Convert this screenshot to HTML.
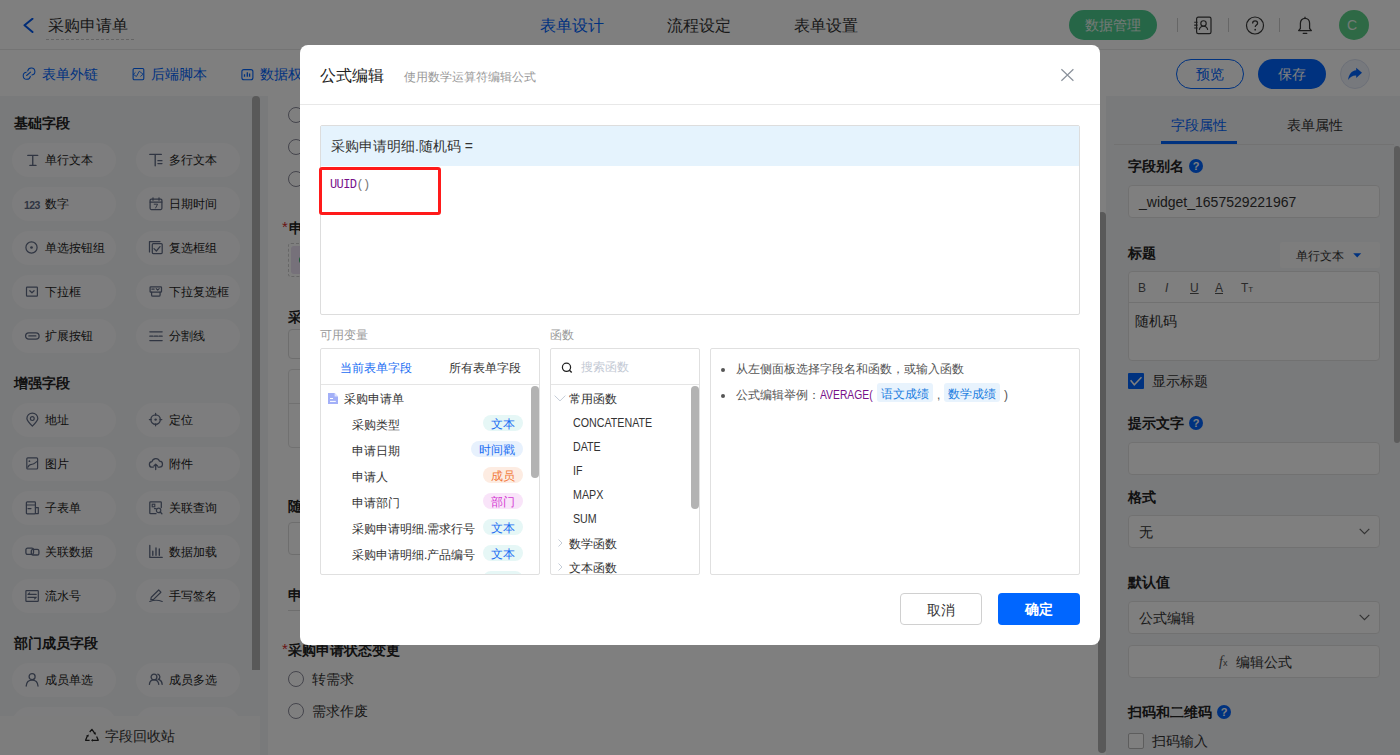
<!DOCTYPE html>
<html><head><meta charset="utf-8">
<style>
*{box-sizing:border-box;margin:0;padding:0}
html,body{width:1400px;height:755px;overflow:hidden}
body{position:relative;font-family:"Liberation Sans",sans-serif;color:#333;background:#fff}
.abs{position:absolute}
.t{position:absolute;white-space:nowrap;line-height:1}
/* header */
#hdr{left:0;top:0;width:1400px;height:50px;background:#fff;border-bottom:1px solid #e8e8e8}
#tb{left:0;top:50px;width:1400px;height:46px;background:#fff}
#side{left:0;top:96px;width:268px;height:659px;background:#f3f4f6}
.pill{position:absolute;width:104px;height:34px;border-radius:17px;background:#fbfbfc}
.pill .ic{position:absolute;left:13px;top:10px;width:15px;height:15px}
.pill span{position:absolute;left:33px;top:11px;font-size:12px;line-height:12px;color:#222;white-space:nowrap}
.sec{position:absolute;left:14px;font-size:14px;font-weight:bold;color:#222;line-height:14px}
#canvas{left:268px;top:96px;width:838px;height:659px;background:#fff}
#right{left:1106px;top:96px;width:294px;height:659px;background:#f3f4f6}
.lbl{position:absolute;left:1128px;font-size:14px;font-weight:600;color:#222;line-height:14px;white-space:nowrap}
.inp{position:absolute;left:1128px;width:252px;height:33px;border:1px solid #e3e3e3;border-radius:4px;background:#fff}
.qm{display:inline-block;width:14px;height:14px;border-radius:50%;background:#0064ff;color:#fff;font-size:11px;line-height:14px;text-align:center;font-weight:bold;vertical-align:top;margin-left:5px}
#mask{left:0;top:0;width:1400px;height:755px;background:rgba(0,0,0,.5)}
#modal{left:300px;top:45px;width:800px;height:600px;background:#fff;border-radius:8px}

.tag{height:16px;border-radius:8px;font-size:12px;line-height:18px;text-align:center;white-space:nowrap}
.tag2{height:19px;border-radius:3px;background:#e8f3fd;color:#1a7de0;font-size:12px;line-height:22px;text-align:center;white-space:nowrap}
.fn{font-size:12px;color:#333;transform:scaleX(0.89);transform-origin:0 0}
</style></head><body>
<!-- ============ BASE PAGE ============ -->
<div id="hdr" class="abs">
  <svg class="abs" style="left:23px;top:18px" width="11" height="16" viewBox="0 0 11 16"><path d="M9.5 0.8L1.5 7.3L9.5 14" fill="none" stroke="#0058ee" stroke-width="2" stroke-linecap="round" stroke-linejoin="round"/></svg>
  <div class="t" style="left:48px;top:18px;font-size:16px;color:#333">采购申请单</div>
  <div class="abs" style="left:46px;top:39px;width:88px;border-top:1px dashed #c8c8c8"></div>
  <div class="t" style="left:540px;top:18px;font-size:16px;color:#0064ff">表单设计</div>
  <div class="t" style="left:667px;top:18px;font-size:16px;color:#333">流程设定</div>
  <div class="t" style="left:794px;top:18px;font-size:16px;color:#333">表单设置</div>
  <div class="abs" style="left:1069px;top:10px;width:88px;height:30px;border-radius:15px;background:#4ccc8f"></div>
  <div class="t" style="left:1085px;top:18px;font-size:14px;color:#e8f5ee">数据管理</div>
  <div class="abs" style="left:1177px;top:18px;width:1px;height:14px;background:#ccc"></div>
  <div class="abs" style="left:1228px;top:18px;width:1px;height:14px;background:#ccc"></div>
  <div class="abs" style="left:1279px;top:18px;width:1px;height:14px;background:#ccc"></div>
  <!-- contact icon -->
  <svg class="abs" style="left:1193px;top:16px" width="20" height="19" viewBox="0 0 20 19"><rect x="3.6" y="1.2" width="14.4" height="16.4" rx="1.6" fill="none" stroke="#3a3a3a" stroke-width="1.2"/><circle cx="10.5" cy="7.4" r="2.7" fill="none" stroke="#3a3a3a" stroke-width="1.15"/><path d="M6.3 13.8c0.4-2.3 2.1-3.6 4.2-3.6s3.8 1.3 4.2 3.6" fill="none" stroke="#3a3a3a" stroke-width="1.15"/><path d="M1.2 6.2h3.4M1.2 9.1h3.4M1.2 12h3.4" stroke="#3a3a3a" stroke-width="1.1"/></svg>
  <!-- help icon -->
  <svg class="abs" style="left:1245px;top:16px" width="20" height="20" viewBox="0 0 20 20"><circle cx="10" cy="9.5" r="8.5" fill="none" stroke="#3a3a3a" stroke-width="1.2"/><path d="M7.6 7.4c0-1.5 1.1-2.5 2.5-2.5s2.5 1 2.5 2.3c0 1.7-2.4 2-2.4 3.9" fill="none" stroke="#3a3a3a" stroke-width="1.25"/><circle cx="10.2" cy="13.7" r="0.85" fill="#3a3a3a"/></svg>
  <!-- bell -->
  <svg class="abs" style="left:1297px;top:16px" width="17" height="19" viewBox="0 0 17 19"><path d="M8 2.3c-2.8 0-4.6 2.2-4.6 5v5.2L1.6 14.6h12.8L12.6 12.5V7.3c0-2.8-1.8-5-4.6-5z" fill="none" stroke="#3a3a3a" stroke-width="1.25" stroke-linejoin="round"/><path d="M8 0.7v1.6" stroke="#3a3a3a" stroke-width="1.2"/><path d="M6.2 17.3h3.6" stroke="#3a3a3a" stroke-width="1.3" stroke-linecap="round"/></svg>
  <div class="abs" style="left:1339px;top:10px;width:30px;height:30px;border-radius:50%;background:#5dd28a"></div>
  <div class="t" style="left:1347px;top:18px;font-size:14px;color:#e6f6ec">C</div>
</div>
<div id="tb" class="abs">
  <svg class="abs" style="left:22px;top:17px" width="14" height="14" viewBox="0 0 14 14"><path d="M4.17 5.15A3.6 3.6 0 1 0 8.35 9.33M9.93 8.05A3.6 3.6 0 1 0 5.75 3.87M4.6 8.5L8.6 5.1" fill="none" stroke="#0064ff" stroke-width="1.05" stroke-linecap="round"/></svg>
  <div class="t" style="left:42px;top:17px;font-size:14px;color:#0064ff">表单外链</div>
  <svg class="abs" style="left:132px;top:17px" width="13" height="14" viewBox="0 0 13 14"><rect x="1.1" y="1.5" width="10.7" height="11.2" rx="1.2" fill="none" stroke="#0064ff" stroke-width="1.1"/><path d="M3.5 5.3L1.4 7.4L4.4 9.5L7.3 4.2L11.1 7.2L8.4 9.5" fill="none" stroke="#0064ff" stroke-width="0.85" stroke-linejoin="round"/></svg>
  <div class="t" style="left:151px;top:17px;font-size:14px;color:#0064ff">后端脚本</div>
  <svg class="abs" style="left:241px;top:17px" width="13" height="14" viewBox="0 0 13 14"><rect x="0.9" y="2.6" width="11" height="10.2" rx="2" fill="none" stroke="#0064ff" stroke-width="1.1"/><path d="M3.5 7.2V9.8M6.3 5.2V9.8M8.6 6.6V9.8" stroke="#0064ff" stroke-width="1.3"/></svg>
  <div class="t" style="left:260px;top:17px;font-size:14px;color:#0064ff">数据权限</div>
  <div class="abs" style="left:1176px;top:9px;width:68px;height:30px;border:1px solid #0064ff;border-radius:15px"></div>
  <div class="t" style="left:1196px;top:17px;font-size:14px;color:#0064ff">预览</div>
  <div class="abs" style="left:1258px;top:9px;width:68px;height:30px;background:#0064ff;border-radius:15px"></div>
  <div class="t" style="left:1278px;top:17px;font-size:14px;color:#fff">保存</div>
  <div class="abs" style="left:1340px;top:9px;width:30px;height:30px;border:1px solid #d9e0f0;background:#eef2fa;border-radius:50%"></div>
  <svg class="abs" style="left:1347px;top:16px" width="17" height="16" viewBox="0 0 17 16"><path d="M9.2 1.7L15 6.7L9.2 12V9.4C5.6 9.3 3 10.8 1.2 13.9C1.6 8.5 4.6 4.7 9.2 4.2Z" fill="#0064ff"/></svg>
</div>

<div id="side" class="abs">
<div class="pill" style="left:12px;top:47px"><svg class="ic" style="left:13px;top:10px" width="15" height="15" viewBox="0 0 15 15" overflow="visible"><path d="M2.8 2.4H12.7M7.75 2.4V12.4M4.9 12.4H11" fill="none" stroke="#606b85" stroke-width="1.35" stroke-linecap="round" stroke-linejoin="round"/></svg><span>单行文本</span></div>
<div class="pill" style="left:135.5px;top:47px"><svg class="ic" style="left:13px;top:10px" width="15" height="15" viewBox="0 0 15 15" overflow="visible"><path d="M0.8 1.4H12.3M6.2 1.4V12.7" fill="none" stroke="#606b85" stroke-width="1.35" stroke-linecap="round" stroke-linejoin="round"/><path d="M8.9 7.7H13M8.9 10.6H13" fill="none" stroke="#606b85" stroke-width="1.2" stroke-linecap="round" stroke-linejoin="round"/></svg><span>多行文本</span></div>
<div class="pill" style="left:12px;top:91px"><b class="t" style="left:12px;top:12.5px;font-size:10.5px;letter-spacing:-0.6px;color:#606b85">123</b><span>数字</span></div>
<div class="pill" style="left:135.5px;top:91px"><svg class="ic" style="left:13px;top:10px" width="15" height="15" viewBox="0 0 15 15" overflow="visible"><rect x="1.1" y="2.1" width="11.8" height="10.4" rx="1.2" fill="none" stroke="#606b85" stroke-width="1.25"/><path d="M1.1 5H12.9M4 0.8V3.2M10 0.8V3.2" fill="none" stroke="#606b85" stroke-width="1.25" stroke-linecap="round" stroke-linejoin="round"/><path d="M5.2 7.2H8.6L6.6 11" fill="none" stroke="#606b85" stroke-width="1.0" stroke-linecap="round" stroke-linejoin="round"/></svg><span>日期时间</span></div>
<div class="pill" style="left:12px;top:135px"><svg class="ic" style="left:13px;top:10px" width="15" height="15" viewBox="0 0 15 15" overflow="visible"><circle cx="6.5" cy="6.5" r="5.6" fill="none" stroke="#606b85" stroke-width="1.2"/><circle cx="6.5" cy="6.5" r="1.35" fill="#606b85"/></svg><span>单选按钮组</span></div>
<div class="pill" style="left:135.5px;top:135px"><svg class="ic" style="left:13px;top:10px" width="15" height="15" viewBox="0 0 15 15" overflow="visible"><path d="M0.5 10.9V0.6H11" fill="none" stroke="#606b85" stroke-width="1.25" stroke-linecap="round" stroke-linejoin="round"/><rect x="3.3" y="2.6" width="9.9" height="9.9" rx="1" fill="none" stroke="#606b85" stroke-width="1.25"/><path d="M5 7.6L7.4 10L11 5.6" fill="none" stroke="#606b85" stroke-width="1.25" stroke-linecap="round" stroke-linejoin="round"/></svg><span>复选框组</span></div>
<div class="pill" style="left:12px;top:179px"><svg class="ic" style="left:13px;top:10px" width="15" height="15" viewBox="0 0 15 15" overflow="visible"><rect x="1.5" y="2.1" width="10.9" height="9.1" rx="0.6" fill="none" stroke="#606b85" stroke-width="1.2"/><path d="M4.8 5.7L6.95 7.8L9.1 5.7" fill="none" stroke="#606b85" stroke-width="1.2" stroke-linecap="round" stroke-linejoin="round"/></svg><span>下拉框</span></div>
<div class="pill" style="left:135.5px;top:179px"><svg class="ic" style="left:13px;top:10px" width="15" height="15" viewBox="0 0 15 15" overflow="visible"><rect x="1.1" y="1.8" width="11.4" height="5.4" rx="0.8" fill="none" stroke="#606b85" stroke-width="1.25"/><path d="M2.8 4.1H5.2" fill="none" stroke="#606b85" stroke-width="1.1" stroke-linecap="round" stroke-linejoin="round"/><path d="M7.2 3.6L8.7 5.2L10.2 3.6" fill="none" stroke="#606b85" stroke-width="1.1" stroke-linecap="round" stroke-linejoin="round"/><path d="M2.6 7.2V9.9Q2.6 11.2 3.9 11.2H9.8Q11.1 11.2 11.1 9.9V7.2" fill="none" stroke="#606b85" stroke-width="1.25" stroke-linecap="round" stroke-linejoin="round"/></svg><span>下拉复选框</span></div>
<div class="pill" style="left:12px;top:223px"><svg class="ic" style="left:13px;top:10px" width="15" height="15" viewBox="0 0 15 15" overflow="visible"><rect x="0.6" y="3.8" width="13.5" height="6.3" rx="3.15" fill="none" stroke="#606b85" stroke-width="1.3"/><path d="M3.8 6.95H10.9" fill="none" stroke="#606b85" stroke-width="1.2" stroke-linecap="round" stroke-linejoin="round"/></svg><span>扩展按钮</span></div>
<div class="pill" style="left:135.5px;top:223px"><svg class="ic" style="left:13px;top:10px" width="15" height="15" viewBox="0 0 15 15" overflow="visible"><path d="M0.8 2.8H13.2M0.8 11.6H13.2" fill="none" stroke="#606b85" stroke-width="1.2" stroke-linecap="round" stroke-linejoin="round"/><path d="M0.8 7.2H4.1M5.4 7.2H8.6M9.9 7.2H13.2" fill="none" stroke="#606b85" stroke-width="1.2" stroke-linecap="round" stroke-linejoin="round"/></svg><span>分割线</span></div>
<div class="pill" style="left:12px;top:307px"><svg class="ic" style="left:13px;top:10px" width="15" height="15" viewBox="0 0 15 15" overflow="visible"><path d="M7.35 13.1C3.7 9.6 1.9 7.6 1.9 5.5A5.45 5.45 0 0 1 12.8 5.5C12.8 7.6 11 9.6 7.35 13.1Z" fill="none" stroke="#606b85" stroke-width="1.25" stroke-linecap="round" stroke-linejoin="round"/><circle cx="7.3" cy="5.6" r="1.9" fill="none" stroke="#606b85" stroke-width="1.2"/></svg><span>地址</span></div>
<div class="pill" style="left:135.5px;top:307px"><svg class="ic" style="left:13px;top:10px" width="15" height="15" viewBox="0 0 15 15" overflow="visible"><circle cx="6.6" cy="6.6" r="4.7" fill="none" stroke="#606b85" stroke-width="1.3"/><circle cx="6.6" cy="6.6" r="1.2" fill="#606b85"/><path d="M6.6 0.4V2.2M6.6 11V12.8M0.4 6.6H2.2M11 6.6H12.8" fill="none" stroke="#606b85" stroke-width="1.3" stroke-linecap="round" stroke-linejoin="round"/></svg><span>定位</span></div>
<div class="pill" style="left:12px;top:351px"><svg class="ic" style="left:13px;top:10px" width="15" height="15" viewBox="0 0 15 15" overflow="visible"><rect x="1.8" y="0.8" width="10.8" height="11.2" rx="1" fill="none" stroke="#606b85" stroke-width="1.2"/><path d="M2.8 10.2C4 7.6 5.4 7.2 7.2 7.2S10 6 11.8 4.6" fill="none" stroke="#606b85" stroke-width="1.15" stroke-linecap="round" stroke-linejoin="round"/><circle cx="4.4" cy="4.2" r="0.9" fill="#606b85"/></svg><span>图片</span></div>
<div class="pill" style="left:135.5px;top:351px"><svg class="ic" style="left:13px;top:10px" width="15" height="15" viewBox="0 0 15 15" overflow="visible"><path d="M4.2 10.2H3.4A2.8 2.8 0 0 1 3 4.6A4 4 0 0 1 10.6 4.2A3 3 0 0 1 10.4 10.2H9.2" fill="none" stroke="#606b85" stroke-width="1.25" stroke-linecap="round" stroke-linejoin="round"/><path d="M6.7 12.6V7.2M4.9 9L6.7 7.2L8.5 9" fill="none" stroke="#606b85" stroke-width="1.3" stroke-linecap="round" stroke-linejoin="round"/></svg><span>附件</span></div>
<div class="pill" style="left:12px;top:395px"><svg class="ic" style="left:13px;top:10px" width="15" height="15" viewBox="0 0 15 15" overflow="visible"><rect x="1.4" y="0.9" width="9" height="12" rx="0.8" fill="none" stroke="#606b85" stroke-width="1.25"/><path d="M1.4 4H10.4M3 7.6H6M10.4 6.6H13.3V12.6H10.4" fill="none" stroke="#606b85" stroke-width="1.2" stroke-linecap="round" stroke-linejoin="round"/></svg><span>子表单</span></div>
<div class="pill" style="left:135.5px;top:395px"><svg class="ic" style="left:13px;top:10px" width="15" height="15" viewBox="0 0 15 15" overflow="visible"><path d="M12.3 6.5V1.6Q12.3 0.8 11.5 0.8H1.6Q0.8 0.8 0.8 1.6V11.9Q0.8 12.7 1.6 12.7H7" fill="none" stroke="#606b85" stroke-width="1.25" stroke-linecap="round" stroke-linejoin="round"/><rect x="3.2" y="3.2" width="2.6" height="2.6" fill="none" stroke="#606b85" stroke-width="1.1"/><circle cx="9.6" cy="9.4" r="2.2" fill="none" stroke="#606b85" stroke-width="1.2"/><path d="M11.2 11L12.9 12.7" fill="none" stroke="#606b85" stroke-width="1.3" stroke-linecap="round" stroke-linejoin="round"/><path d="M5.4 7.6H7.2" fill="none" stroke="#606b85" stroke-width="1.1" stroke-linecap="round" stroke-linejoin="round"/></svg><span>关联查询</span></div>
<div class="pill" style="left:12px;top:439px"><svg class="ic" style="left:13px;top:10px" width="15" height="15" viewBox="0 0 15 15" overflow="visible"><rect x="0.9" y="3.2" width="7.6" height="6.2" rx="1.6" fill="none" stroke="#606b85" stroke-width="1.3"/><rect x="6.3" y="4.4" width="7.6" height="5.6" rx="1.6" fill="none" stroke="#606b85" stroke-width="1.3"/></svg><span>关联数据</span></div>
<div class="pill" style="left:135.5px;top:439px"><svg class="ic" style="left:13px;top:10px" width="15" height="15" viewBox="0 0 15 15" overflow="visible"><path d="M0.8 0.4V12.4H13.2" fill="none" stroke="#606b85" stroke-width="1.3" stroke-linecap="round" stroke-linejoin="round"/><path d="M3.8 6.2V10.2M7 3V10.2M10.3 4V10.2" fill="none" stroke="#606b85" stroke-width="1.4" stroke-linecap="round" stroke-linejoin="round"/></svg><span>数据加载</span></div>
<div class="pill" style="left:12px;top:483px"><svg class="ic" style="left:13px;top:10px" width="15" height="15" viewBox="0 0 15 15" overflow="visible"><rect x="0.9" y="1.6" width="12.4" height="10.8" rx="0.6" fill="none" stroke="#606b85" stroke-width="1.2"/><path d="M3 5.4H11.2M4.6 3.9L3 5.4M3 8.4H11.2M9.6 9.9L11.2 8.4" fill="none" stroke="#606b85" stroke-width="1.15" stroke-linecap="round" stroke-linejoin="round"/></svg><span>流水号</span></div>
<div class="pill" style="left:135.5px;top:483px"><svg class="ic" style="left:13px;top:10px" width="15" height="15" viewBox="0 0 15 15" overflow="visible"><path d="M1.8 10.6L2.3 8.2L9.7 1L11.9 3.2L4.6 10.4Z" fill="none" stroke="#606b85" stroke-width="1.2" stroke-linecap="round" stroke-linejoin="round"/><path d="M0.8 12.5C5 10.8 9 10.8 13.2 12.5" fill="none" stroke="#606b85" stroke-width="1.2" stroke-linecap="round" stroke-linejoin="round"/></svg><span>手写签名</span></div>
<div class="pill" style="left:12px;top:567px"><svg class="ic" style="left:13px;top:10px" width="15" height="15" viewBox="0 0 15 15" overflow="visible"><circle cx="7.1" cy="3.7" r="3" fill="none" stroke="#606b85" stroke-width="1.3"/><path d="M1.2 13C1.5 9.2 3.8 7.1 7.1 7.1S12.7 9.2 13 13" fill="none" stroke="#606b85" stroke-width="1.3" stroke-linecap="round" stroke-linejoin="round"/></svg><span>成员单选</span></div>
<div class="pill" style="left:135.5px;top:567px"><svg class="ic" style="left:13px;top:10px" width="15" height="15" viewBox="0 0 15 15" overflow="visible"><circle cx="5" cy="4" r="2.9" fill="none" stroke="#606b85" stroke-width="1.3"/><path d="M0.4 11.4C0.6 8.4 2.4 6.8 5 6.8S9.4 8.4 9.8 11.4" fill="none" stroke="#606b85" stroke-width="1.3" stroke-linecap="round" stroke-linejoin="round"/><path d="M8.8 1.2A2.9 2.9 0 0 1 9.2 6.6M10.6 6.9C12.2 7.6 13 9.2 13.2 11.4" fill="none" stroke="#606b85" stroke-width="1.3" stroke-linecap="round" stroke-linejoin="round"/></svg><span>成员多选</span></div>
<div class="pill" style="left:12px;top:611px"><svg class="ic" style="left:13px;top:10px" width="15" height="15" viewBox="0 0 15 15" overflow="visible"><circle cx="7.1" cy="3.7" r="3" fill="none" stroke="#606b85" stroke-width="1.3"/><path d="M1.2 13C1.5 9.2 3.8 7.1 7.1 7.1S12.7 9.2 13 13" fill="none" stroke="#606b85" stroke-width="1.3" stroke-linecap="round" stroke-linejoin="round"/></svg><span>部门单选</span></div>
<div class="pill" style="left:135.5px;top:611px"><svg class="ic" style="left:13px;top:10px" width="15" height="15" viewBox="0 0 15 15" overflow="visible"><circle cx="5" cy="4" r="2.9" fill="none" stroke="#606b85" stroke-width="1.3"/><path d="M0.4 11.4C0.6 8.4 2.4 6.8 5 6.8S9.4 8.4 9.8 11.4" fill="none" stroke="#606b85" stroke-width="1.3" stroke-linecap="round" stroke-linejoin="round"/><path d="M8.8 1.2A2.9 2.9 0 0 1 9.2 6.6M10.6 6.9C12.2 7.6 13 9.2 13.2 11.4" fill="none" stroke="#606b85" stroke-width="1.3" stroke-linecap="round" stroke-linejoin="round"/></svg><span>部门多选</span></div>
<div class="sec" style="top:20px">基础字段</div>
<div class="sec" style="top:280px">增强字段</div>
<div class="sec" style="top:540px">部门成员字段</div>
<div class="abs" style="left:252px;top:0;width:8px;height:574px;border-radius:4px 4px 0 0;background:#b2b2b2"></div>
<div class="abs" style="left:0;top:620px;width:260px;height:39px;background:#fafafa"></div>
<svg class="abs" style="left:80px;top:626px" width="24" height="24" viewBox="0 0 24 24"><path d="M9.6 18.3H5.6L7.5 13.6M9.7 10L11.9 7.3L14.6 11.2M16.6 14.4L18.3 18.3H12.6" fill="none" stroke="#222" stroke-width="1.25" stroke-linejoin="round"/><path d="M6.3 13.6L8.9 12.6L8.3 15.1Z M13.4 11.6L15.9 10.3L15.6 12.9Z M12.9 16.9L11 18.3L12.9 19.7Z" fill="#222"/></svg>
<div class="t" style="left:105px;top:633px;font-size:14px;color:#333">字段回收站</div>
</div>
<div id="canvas" class="abs">
  <div class="abs" style="left:20px;top:11px;width:16px;height:16px;border:1px solid #8a8a99;border-radius:50%"></div>
  <div class="abs" style="left:20px;top:43px;width:16px;height:16px;border:1px solid #8a8a99;border-radius:50%"></div>
  <div class="abs" style="left:20px;top:75px;width:16px;height:16px;border:1px solid #8a8a99;border-radius:50%"></div>
  <div class="t" style="left:14px;top:123px;font-size:15px;color:#d42a2a">*</div>
  <div class="t" style="left:21px;top:125px;font-size:14px;font-weight:bold;color:#222">申请类型</div>
  <div class="abs" style="left:20px;top:147px;width:200px;height:34px;border:1px dashed #cfcfcf;border-radius:3px"></div>
  <div class="abs" style="left:23px;top:150px;width:60px;height:28px;background:#ece2f4;border-radius:3px"></div>
  <div class="abs" style="left:31px;top:160px;width:8px;height:8px;background:#39b36e;border-radius:50%"></div>
  <div class="t" style="left:20px;top:214px;font-size:14px;font-weight:bold;color:#222">采购类型</div>
  <div class="abs" style="left:20px;top:233px;width:400px;height:30px;border:1px solid #ddd;border-radius:4px"></div>
  <div class="abs" style="left:20px;top:273px;width:600px;height:79px;border:1px solid #e3e3e3;border-radius:4px"></div>
  <div class="abs" style="left:20px;top:307px;width:600px;height:1px;background:#e3e3e3"></div>
  <div class="t" style="left:20px;top:403px;font-size:14px;font-weight:bold;color:#222">随机码</div>
  <div class="abs" style="left:20px;top:426px;width:400px;height:33px;border:1px solid #ddd;border-radius:4px"></div>
  <div class="t" style="left:20px;top:492px;font-size:14px;font-weight:bold;color:#222">申请明细</div>
  <div class="abs" style="left:20px;top:514px;width:700px;height:1px;background:#ddd"></div>
  <div class="t" style="left:14px;top:545px;font-size:15px;color:#d42a2a">*</div>
  <div class="t" style="left:20px;top:547px;font-size:14px;font-weight:bold;color:#222">采购申请状态变更</div>
  <div class="abs" style="left:20px;top:575px;width:16px;height:16px;border:1px solid #8a8a99;border-radius:50%"></div>
  <div class="t" style="left:44px;top:576px;font-size:14px;color:#333">转需求</div>
  <div class="abs" style="left:20px;top:607px;width:16px;height:16px;border:1px solid #8a8a99;border-radius:50%"></div>
  <div class="t" style="left:44px;top:608px;font-size:14px;color:#333">需求作废</div>
  <div class="abs" style="left:830px;top:116px;width:8px;height:541px;border-radius:4px;background:#b2b2b2"></div>
</div>

<div id="right" class="abs">
  <div class="t" style="left:65px;top:22px;font-size:14px;color:#0064ff">字段属性</div>
  <div class="t" style="left:181px;top:22px;font-size:14px;color:#333">表单属性</div>
  <div class="abs" style="left:8px;top:48px;width:280px;height:1px;background:#e5e5e5"></div>
  <div class="abs" style="left:55px;top:45px;width:76px;height:3px;background:#0064ff"></div>
  <div class="abs" style="left:288px;top:50px;width:6px;height:297px;border-radius:3px;background:#b8b8b8"></div>
</div>
<div class="lbl" style="top:159px">字段别名<span class="qm">?</span></div>
<div class="inp" style="top:185px"></div>
<div class="t" style="left:1139px;top:195px;font-size:14px;color:#333">_widget_1657529221967</div>
<div class="lbl" style="top:246px">标题</div>
<div class="abs" style="left:1280px;top:242px;width:100px;height:26px;background:#fafafa;border-radius:2px"></div>
<div class="t" style="left:1296px;top:250px;font-size:12px;color:#333">单行文本</div>
<svg class="abs" style="left:1353px;top:253px" width="9" height="6" viewBox="0 0 9 6"><path d="M0.2 0.2h8L4.2 4.4z" fill="#0064ff"/></svg>
<div class="abs" style="left:1128px;top:271px;width:252px;height:90px;border:1px solid #e3e3e3;border-radius:4px;background:#fff"></div>
<div class="abs" style="left:1129px;top:302px;width:250px;height:1px;background:#e3e3e3"></div>
<div class="t" style="left:1138px;top:282px;font-size:12px;color:#555">B</div>
<div class="t" style="left:1165px;top:282px;font-size:12px;color:#555;font-style:italic">I</div>
<div class="t" style="left:1190px;top:282px;font-size:12px;color:#555;text-decoration:underline">U</div>
<div class="t" style="left:1215px;top:282px;font-size:12px;color:#555;text-decoration:underline">A</div>
<div class="t" style="left:1241px;top:282px;font-size:12px;color:#555">T<span style="font-size:8px">T</span></div>
<div class="t" style="left:1135px;top:314px;font-size:14px;color:#333">随机码</div>
<div class="abs" style="left:1128px;top:373px;width:16px;height:16px;background:#0064ff;border-radius:1px"></div>
<svg class="abs" style="left:1128px;top:373px" width="16" height="16" viewBox="0 0 16 16"><path d="M2.6 7.2L6.3 11.8L13.5 4.3" fill="none" stroke="#fff" stroke-width="1.5"/></svg>
<div class="t" style="left:1152px;top:374px;font-size:14px;color:#333">显示标题</div>
<div class="lbl" style="top:416px">提示文字<span class="qm">?</span></div>
<div class="inp" style="top:442px"></div>
<div class="lbl" style="top:490px">格式</div>
<div class="inp" style="top:515px"></div>
<div class="t" style="left:1139px;top:525px;font-size:14px;color:#333">无</div>
<svg class="abs" style="left:1359px;top:528px" width="11" height="7" viewBox="0 0 11 7"><path d="M0.7 0.8L5.5 5.6 10.3 0.8" fill="none" stroke="#666" stroke-width="1.2"/></svg>
<div class="lbl" style="top:575px">默认值</div>
<div class="inp" style="top:601px"></div>
<div class="t" style="left:1139px;top:611px;font-size:14px;color:#333">公式编辑</div>
<svg class="abs" style="left:1359px;top:614px" width="11" height="7" viewBox="0 0 11 7"><path d="M0.7 0.8L5.5 5.6 10.3 0.8" fill="none" stroke="#666" stroke-width="1.2"/></svg>
<div class="inp" style="top:645px"></div>
<div class="t" style="left:1219px;top:655px;font-size:14px;color:#555;font-family:'Liberation Serif',serif;font-style:italic">f<span style="font-size:9px;font-style:normal;font-family:'Liberation Sans',sans-serif">x</span></div>
<div class="t" style="left:1236px;top:655px;font-size:14px;color:#333">编辑公式</div>
<div class="lbl" style="top:705px">扫码和二维码<span class="qm">?</span></div>
<div class="abs" style="left:1128px;top:733px;width:16px;height:16px;border:1px solid #bbb;border-radius:2px;background:#fff"></div>
<div class="t" style="left:1152px;top:734px;font-size:14px;color:#333">扫码输入</div>

<div id="mask" class="abs"></div>
<div id="modal" class="abs">
  <div class="t" style="left:20px;top:23px;font-size:16px;color:#222">公式编辑</div>
  <div class="t" style="left:104px;top:26px;font-size:12px;color:#999">使用数学运算符编辑公式</div>
  <svg class="abs" style="left:760px;top:23px" width="15" height="15" viewBox="0 0 15 15"><path d="M1.4 1.3L13.4 12.7M13.4 1.3L1.4 12.7" stroke="#8a919b" stroke-width="1.2"/></svg>
  <div class="abs" style="left:0;top:59px;width:800px;height:1px;background:#e8e8e8"></div>
  <!-- formula box -->
  <div class="abs" style="left:20px;top:80px;width:760px;height:190px;border:1px solid #ddd;border-radius:2px"></div>
  <div class="abs" style="left:21px;top:81px;width:758px;height:40px;background:#e5f3fd"></div>
  <div class="t" style="left:31px;top:94px;font-size:14px;color:#333">采购申请明细.随机码 =</div>
  <div class="t" style="left:30px;top:134px;font-size:12px;font-family:'Liberation Mono',monospace;letter-spacing:-0.6px"><span style="color:#77118a">UUID</span><span style="color:#777">()</span></div>
  <!-- labels -->
  <div class="t" style="left:20px;top:284px;font-size:12px;color:#999">可用变量</div>
  <div class="t" style="left:250px;top:284px;font-size:12px;color:#999">函数</div>
  <!-- panel 1 -->
  <div class="abs" style="left:20px;top:303px;width:220px;height:227px;border:1px solid #e0e0e0;border-radius:2px;overflow:hidden">
    <div class="t" style="left:19px;top:13px;font-size:12px;color:#1b6ef3">当前表单字段</div>
    <div class="t" style="left:128px;top:13px;font-size:12px;color:#333">所有表单字段</div>
    <div class="abs" style="left:0;top:35px;width:220px;height:1px;background:#e5e5e5"></div>
    <div class="abs" style="left:210px;top:37px;width:8px;height:92px;border-radius:4px;background:#b3b3b3"></div>
    <svg class="abs" style="left:7px;top:44px" width="10" height="11" viewBox="0 0 10 11"><path d="M0 0H6.6L10 3.4V11H0Z" fill="#a3b0f8"/><path d="M6.6 0V3.4H10" fill="#dfe4fd"/><path d="M2 5.5H5M2 8.4H7.8" stroke="#fff" stroke-width="1"/></svg>
    <div class="t" style="left:23px;top:44px;font-size:12px;color:#333">采购申请单</div>
    <div class="t" style="left:31px;top:70px;font-size:12px;color:#333">采购类型</div>
    <div class="abs tag" style="left:162px;top:66px;width:40px;background:#e6f7f6;color:#1b6ef3">文本</div>
    <div class="t" style="left:31px;top:96px;font-size:12px;color:#333">申请日期</div>
    <div class="abs tag" style="left:150px;top:92px;width:52px;background:#e7f1fd;color:#1b6ef3">时间戳</div>
    <div class="t" style="left:31px;top:122px;font-size:12px;color:#333">申请人</div>
    <div class="abs tag" style="left:162px;top:118px;width:40px;background:#fdece2;color:#f27a3a">成员</div>
    <div class="t" style="left:31px;top:148px;font-size:12px;color:#333">申请部门</div>
    <div class="abs tag" style="left:162px;top:144px;width:40px;background:#f9e4f9;color:#d43ad3">部门</div>
    <div class="t" style="left:31px;top:174px;font-size:12px;color:#333">采购申请明细.需求行号</div>
    <div class="abs tag" style="left:162px;top:170px;width:40px;background:#e6f7f6;color:#1b6ef3">文本</div>
    <div class="t" style="left:31px;top:200px;font-size:12px;color:#333">采购申请明细.产品编号</div>
    <div class="abs tag" style="left:162px;top:196px;width:40px;background:#e6f7f6;color:#1b6ef3">文本</div>
    <div class="abs tag" style="left:162px;top:222px;width:40px;background:#e6f7f6;color:#1b6ef3">文本</div>
  </div>
  <!-- panel 2 -->
  <div class="abs" style="left:250px;top:303px;width:150px;height:227px;border:1px solid #e0e0e0;border-radius:2px;overflow:hidden">
    <svg class="abs" style="left:10px;top:13px" width="12" height="12" viewBox="0 0 12 12"><circle cx="5.5" cy="5.3" r="4.1" fill="none" stroke="#222" stroke-width="1.25"/><path d="M8.4 8.3l2.3 2.3" stroke="#222" stroke-width="1.4"/></svg>
    <div class="t" style="left:30px;top:12px;font-size:12px;color:#c3c9d4">搜索函数</div>
    <div class="abs" style="left:0;top:35px;width:150px;height:1px;background:#e5e5e5"></div>
    <div class="abs" style="left:140px;top:37px;width:8px;height:123px;border-radius:4px;background:#b3b3b3"></div>
    <svg class="abs" style="left:3px;top:46px" width="12" height="7" viewBox="0 0 12 7"><path d="M0.6 0.6L6 5.9 11.4 0.6" fill="none" stroke="#c5cdd8" stroke-width="1"/></svg>
    <div class="t" style="left:18px;top:44px;font-size:12px;color:#333">常用函数</div>
    <div class="t fn" style="left:22px;top:68px">CONCATENATE</div>
    <div class="t fn" style="left:22px;top:92px">DATE</div>
    <div class="t fn" style="left:22px;top:116px">IF</div>
    <div class="t fn" style="left:22px;top:140px">MAPX</div>
    <div class="t fn" style="left:22px;top:164px">SUM</div>
    <svg class="abs" style="left:7px;top:190px" width="5" height="8" viewBox="0 0 5 8"><path d="M0.5 0.5L4 4 0.5 7.5" fill="none" stroke="#c5cdd8" stroke-width="1"/></svg>
    <div class="t" style="left:18px;top:189px;font-size:12px;color:#333">数学函数</div>
    <svg class="abs" style="left:7px;top:214px" width="5" height="8" viewBox="0 0 5 8"><path d="M0.5 0.5L4 4 0.5 7.5" fill="none" stroke="#c5cdd8" stroke-width="1"/></svg>
    <div class="t" style="left:18px;top:213px;font-size:12px;color:#333">文本函数</div>
  </div>
  <!-- panel 3 -->
  <div class="abs" style="left:410px;top:303px;width:370px;height:227px;border:1px solid #e0e0e0;border-radius:2px">
    <div class="abs" style="left:10px;top:19px;width:4px;height:4px;border-radius:50%;background:#555"></div>
    <div class="t" style="left:25px;top:14px;font-size:12px;color:#555">从左侧面板选择字段名和函数，或输入函数</div>
    <div class="abs" style="left:10px;top:45px;width:4px;height:4px;border-radius:50%;background:#555"></div>
    <div class="t" style="left:25px;top:40px;font-size:12px;color:#555">公式编辑举例：<span style="color:#77118a;display:inline-block;transform:scaleX(0.86);transform-origin:0 0">AVERAGE(</span></div>
    <div class="abs tag2" style="left:166px;top:34px;width:56px">语文成绩</div>
    <div class="t" style="left:226px;top:40px;font-size:12px;color:#555">,</div>
    <div class="abs tag2" style="left:233px;top:34px;width:56px">数学成绩</div>
    <div class="t" style="left:293px;top:40px;font-size:12px;color:#555">)</div>
  </div>
  <div class="abs" style="left:600px;top:548px;width:82px;height:32px;border:1px solid #d0d0d0;border-radius:4px;background:#fff"></div>
  <div class="t" style="left:627px;top:558px;font-size:14px;color:#333">取消</div>
  <div class="abs" style="left:698px;top:548px;width:82px;height:32px;border-radius:4px;background:#0066ff"></div>
  <div class="t" style="left:725px;top:557px;font-size:14px;font-weight:600;color:#fff">确定</div>
</div>
<div class="abs" style="left:319px;top:167px;width:122px;height:48px;border:3px solid #ff1a1a;border-radius:3px"></div>

</body></html>
